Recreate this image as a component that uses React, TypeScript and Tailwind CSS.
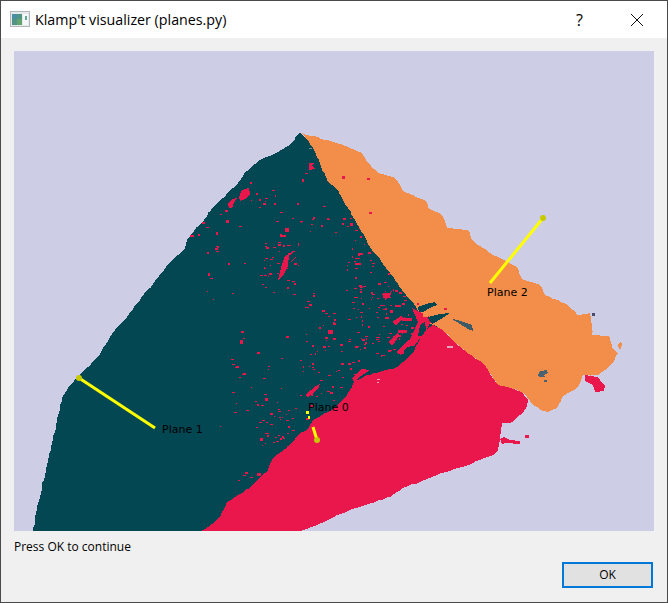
import React from "react";

const TEAL = "#034753";
const RED = "#e9174b";
const ORANGE = "#f38d4a";
const LAV = "#cdcde6";

// Deterministic ragged edge for the point-cloud silhouettes.
function rough(points: string, amp: number, seed: number): string {
  const pts = points.split(" ").map((p) => p.split(",").map(Number));
  let s = seed;
  const rnd = () => {
    s = (s * 16807) % 2147483647;
    return (s % 1000) / 1000;
  };
  const out: string[] = [];
  pts.forEach(([x, y], i) => {
    const [nx, ny] = pts[(i + 1) % pts.length];
    const len = Math.hypot(nx - x, ny - y);
    const n = Math.max(1, Math.round(len / 4));
    for (let k = 0; k < n; k++) {
      const t = k / n;
      const j = k === 0 ? 0 : amp;
      out.push(`${(x + (nx - x) * t + (rnd() - 0.5) * 2 * j).toFixed(1)},${(y + (ny - y) * t + (rnd() - 0.5) * 2 * j).toFixed(1)}`);
    }
  });
  return out.join(" ");
}

function scatter(seed: number, count: number, x0: number, y0: number, x1: number, y1: number) {
  let s = seed;
  const rnd = () => {
    s = (s * 48271) % 2147483647;
    return (s % 10000) / 10000;
  };
  const res: [number, number, number, number][] = [];
  for (let i = 0; i < count; i++) {
    res.push([Math.round(x0 + rnd() * (x1 - x0)), Math.round(y0 + rnd() * (y1 - y0)), 1 + Math.floor(rnd() * 3), 1 + Math.floor(rnd() * 1.5)]);
  }
  return res;
}

const tealPts = rough(
  "300,133 296,136 290,145 276,153 260,160 252,167 245,172 238,183 226,195 213,207 203,222 194,231 187,240 185,248 170,262 155,281 140,300 127,317 115,330 106,344 98,357 88,367 80,375 70,385 62,398 57,420 52,443 47,465 42,487 37,510 32,536 230,536 450,340 430,300 340,170",
  0.7,
  11,
);
const redPts = rough(
  "196,535 212,524 220,517 224,509 227,502 238,495 250,488 258,480 268,470 273,458 287,448 300,433 307,430 313,420 328,412 338,405 345,398 350,390 353,383 367,375 382,371 397,367 406,360 413,353 418,343 422,333 430,327 433,325 443,330 450,338 467,353 483,363 498,385 510,388 523,393 528,400 526,408 520,415 510,423 502,423 500,437 498,450 493,455 480,460 463,467 450,471 437,475 420,482 403,488 390,497 365,505 337,515 317,525 285,536",
  0.6,
  23,
);
const orangePts = rough(
  "302,133 313,136 333,142 345,146 355,150 362,153 367,162 377,172 395,178 400,185 405,192 416,197 427,202 428,208 442,215 447,228 468,230 472,240 480,246 490,253 504,260 518,268 520,275 523,280 535,283 542,287 545,295 558,300 567,304 573,310 577,315 590,313 592,325 592,335 610,337 612,347 618,353 613,363 605,370 598,375 583,375 578,387 570,392 562,397 557,408 548,412 540,410 533,405 527,397 523,393 510,388 498,385 483,363 467,353 450,338 443,330 433,325 428,322 420,312 410,300 395,280 390,273 370,247 348,208 338,190 328,182 313,148",
  0.7,
  37,
);

const generated = [
  ...scatter(101, 45, 345, 215, 395, 300),
  ...scatter(202, 70, 360, 285, 415, 355),
  ...scatter(303, 55, 300, 300, 365, 400),
  ...scatter(404, 35, 262, 235, 300, 295),
  ...scatter(505, 30, 255, 400, 300, 450),
  ...scatter(606, 25, 225, 330, 290, 420),
  ...scatter(707, 18, 250, 190, 330, 235),
  ...scatter(808, 12, 200, 220, 250, 300),
];

const redSpecks: [number, number, number, number][] = [
  [202,222,3,2],[190,235,4,2],[225,210,3,2],[226,220,3,3],[220,214,2,1],[250,182,2,2],[256,193,2,2],[272,190,3,1],
  [265,198,3,1],[263,203,3,2],[259,207,2,1],[285,228,4,4],[280,235,6,2],[278,242,3,1],[273,247,3,1],[298,243,1,3],
  [302,179,2,3],[305,173,3,1],[323,206,3,1],[327,218,2,1],[343,218,3,2],[350,223,3,3],[342,223,2,2],[335,232,2,1],
  [358,253,5,2],[355,263,6,2],[355,258,5,1],[355,268,3,1],[368,252,3,2],[370,272,2,1],[378,283,3,2],[383,293,4,5],
  [313,293,2,1],[260,275,3,1],[208,273,2,3],[232,293,2,1],[216,232,2,3],[198,234,2,2],
  [313,295,2,2],[305,307,4,1],[322,310,3,2],[333,323,3,2],[328,330,5,4],[325,337,3,2],[385,293,4,2],[395,290,3,2],
  [380,305,5,1],[395,305,6,2],[390,310,3,3],[385,317,4,2],[377,317,2,1],[402,318,10,3],[398,330,9,3],[395,335,6,2],
  [387,337,3,1],[407,343,8,3],[398,350,6,4],[350,368,2,2],[348,363,3,2],[330,392,3,2],[340,387,3,1],[342,377,2,1],
  [328,375,3,1],[320,380,3,1],[288,410,2,1],[295,408,2,1],[278,435,2,1],[273,442,2,1],[283,438,2,1],[333,400,2,1],
  [240,340,3,4],[265,398,3,3],[220,426,1,1],[260,438,3,3],[265,433,4,1],[280,438,2,2],[257,473,4,3],[245,472,3,2],
  [238,480,2,1],[243,475,3,1],[250,477,3,1],[287,433,2,1],[342,176,3,3],[367,178,3,2],[369,212,3,2],[525,435,4,3],
  [417,303,2,2],[444,308,3,2],[300,395,2,1],[310,405,3,2],[306,418,3,2],[318,372,2,1],[300,360,2,1],[312,345,2,2],
];

const redShapes = [
  "239,197 242,190 249,188 250,194 245,199 240,201",
  "228,204 232,199 237,198 234,203 232,208 229,208",
  "278,280 281,268 285,256 289,254 288,266 283,276",
  "287,254 297,250 290,255",
  "292,260 296,257 291,263",
  "309,163 314,163 312,166 315,169 309,170",
  "412,308 428,316 432,320 425,332 415,345 405,348 412,335 418,322",
  "305,395 311,390 314,387 320,384 318,389 312,394 308,397",
  "352,378 362,369 370,370 358,378 355,384",
  "585,375 597,377 600,380 605,386 604,391 595,392 593,385 585,381",
  "500,439 504,437 510,440 520,441 520,444 506,443 502,444",
  "384,296 392,291 390,296 385,300",
  "392,322 401,316 404,318 396,325",
  "388,342 397,333 400,335 392,346",
  "396,352 408,340 411,342 401,355",
];

const Label = ({ className, children }: { className: string; children: string }) => (
  <span className={`absolute font-['DejaVu_Sans',sans-serif] text-[11px] leading-[13px] text-black whitespace-nowrap ${className}`}>
    {children}
  </span>
);

export default function App() {
  return (
    <div className="flex h-[603px] w-[668px] flex-col border border-[#4a4a4a] bg-[#f0f0f0] font-['Open_Sans',sans-serif] text-black">
      <div className="flex h-[37px] shrink-0 items-center bg-white pl-[9px]">
        <svg width="20" height="17" viewBox="0 0 20 17" shapeRendering="crispEdges">
          <rect x="0" y="0" width="20" height="16" fill="#b4b8ba" />
          <rect x="1" y="1" width="18" height="14" fill="#e6e9ea" />
          <rect x="2" y="3" width="10" height="11" fill="#4f9484" />
          <rect x="2" y="3" width="5" height="5" fill="#4a8ea6" />
          <rect x="7" y="8" width="5" height="6" fill="#63a36e" />
          <rect x="13" y="3" width="5" height="11" fill="#f6f7f7" />
          <rect x="15" y="5" width="2" height="4" fill="#5eab98" />
        </svg>
        <span className="ml-[5px] text-[14.25px] leading-5">Klamp't visualizer (planes.py)</span>
        <span className="ml-auto mr-[47px] text-[16px] leading-5">?</span>
        <svg width="14" height="14" viewBox="0 0 14 14" className="mr-[23px]">
          <path d="M1 1 L13 13 M13 1 L1 13" stroke="#111" strokeWidth="1" fill="none" />
        </svg>
      </div>

      <div className="relative ml-[13px] mt-[13px] h-[480px] w-[640px] shrink-0 bg-[#cdcde6]">
        <svg width="640" height="480" viewBox="14 51 640 480" shapeRendering="crispEdges" className="block">
          <rect x="14" y="51" width="640" height="480" fill={LAV} />
          <polygon points={tealPts} fill={TEAL} />
          {generated.map(([x, y, w, h], i) => (
            <rect key={i} x={x} y={y} width={w} height={h} fill={RED} />
          ))}
          <polygon points={orangePts} fill={ORANGE} />
          <polygon points={redPts} fill={RED} />
          {redShapes.map((p, i) => (
            <polygon key={i} points={p} fill={RED} />
          ))}
          {redSpecks.map(([x, y, w, h], i) => (
            <rect key={i} x={x} y={y} width={w} height={h} fill={RED} />
          ))}
          <polygon points="418,307 426,304 435,302 437,305 430,308 423,312 419,312" fill={TEAL} />
          <polygon points="428,317 440,314 450,313 444,317 436,322 432,324 429,321" fill={TEAL} />
          <polygon points="420,325 425,322 426,330 422,336 418,336" fill={TEAL} />
          <polygon points="452,319 458,320 472,325 473,331 468,329" fill="#3d5a66" />
          <polygon points="538,375 540,371 547,370 548,373 544,375 545,377 539,377" fill="#4b6270" />
          <rect x="544" y="380" width="3" height="2" fill="#4b6270" />
          <rect x="592" y="313" width="3" height="3" fill="#4b4a6a" />
          <polygon points="618,345 620,342 622,344 621,349 619,349" fill={ORANGE} />
          <rect x="447" y="346" width="6" height="2" fill="#e3a5c0" />
          <rect x="377" y="379" width="3" height="1" fill="#e3a5c0" />
          <rect x="377" y="382" width="2" height="1" fill="#e3a5c0" />
          <rect x="309" y="148" width="3" height="1" fill="#6a8e98" />
          <rect x="423" y="313" width="5" height="4" fill={ORANGE} />

          <g shapeRendering="geometricPrecision">
            <line x1="543" y1="218" x2="490" y2="283" stroke="#ffff00" strokeWidth="3" />
            <circle cx="543" cy="218" r="3" fill="#c8c800" />
            <line x1="79" y1="378" x2="155" y2="428" stroke="#ffff00" strokeWidth="3" />
            <circle cx="79" cy="378" r="3" fill="#c8c800" />
            <line x1="313" y1="427" x2="317" y2="440" stroke="#ffff00" strokeWidth="3" />
            <circle cx="317" cy="440" r="3" fill="#c8c800" />
          </g>
          <rect x="306" y="411" width="3" height="3" fill="#ffff00" />
          <rect x="308" y="416" width="2" height="3" fill="#ffff00" />
        </svg>
        <Label className="left-[473px] top-[235px]">Plane 2</Label>
        <Label className="left-[148px] top-[372px]">Plane 1</Label>
        <Label className="left-[294px] top-[350px]">Plane 0</Label>
      </div>

      <div className="ml-[13px] mt-[8px] text-xs leading-4">Press OK to continue</div>
      <div className="mr-[14px] mt-[7px] flex justify-end">
        <button className="h-[26px] w-[91px] border-2 border-[#0078d7] bg-[#e1e1e1] text-xs leading-4 text-black">OK</button>
      </div>
    </div>
  );
}
